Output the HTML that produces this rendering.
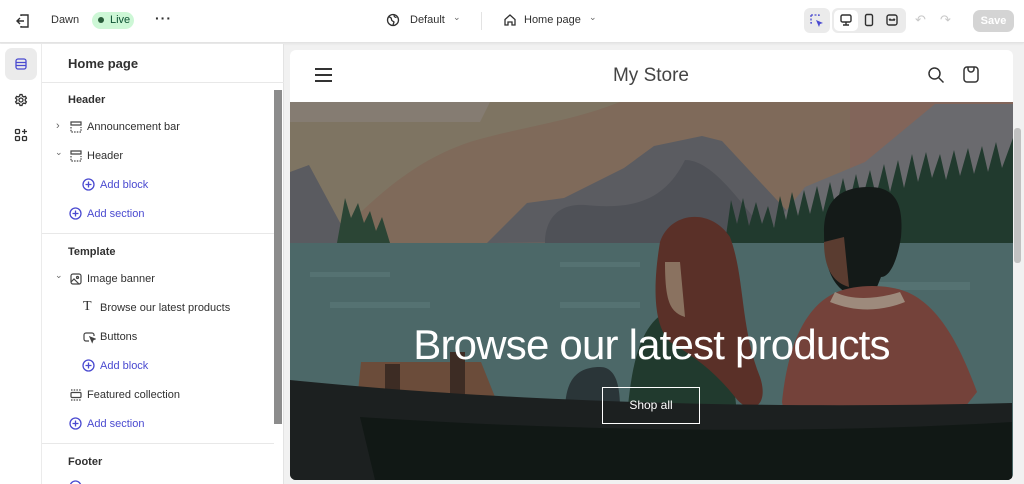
<!DOCTYPE html>
<html><head><meta charset="utf-8"><style>
*{box-sizing:border-box;margin:0;padding:0}
html,body{width:1024px;height:484px;overflow:hidden}
body{background:#f1f1f1;font-family:"Liberation Sans",sans-serif;color:#303030;position:relative;font-size:11px}
.top{position:absolute;left:0;top:0;width:1024px;height:43px;background:#fff;border-bottom:1px solid #e3e3e3;box-shadow:0 1px 2px rgba(0,0,0,.06)}
.abs{position:absolute}
.rail{position:absolute;left:0;top:44px;width:42px;height:440px;background:#fff;border-right:1px solid #ebebeb}
.panel{position:absolute;left:42px;top:44px;width:242px;height:440px;background:#fff;border-right:1px solid #e3e3e3}
.row{position:absolute;font-size:11px;color:#303030;white-space:nowrap}
.blue{color:#4a4ad0}
.h{font-weight:bold;font-size:11px}
.sep{position:absolute;left:0;width:232px;height:1px;background:#e8e8e8}
svg{display:block}
</style></head><body>
<div class="top">
  <svg class="abs" style="left:14px;top:12px" width="18" height="18" viewBox="0 0 18 18" fill="none" stroke="#303030" stroke-width="1.4"><path d="M7 4V3h7v12H7v-1"/><path d="M10 9H3M6 6L3 9l3 3"/></svg>
  <div class="abs" style="left:51px;top:14px;font-size:11px">Dawn</div>
  <div class="abs" style="left:92px;top:12px;width:42px;height:17px;border-radius:9px;background:#cdf7d6;font-size:11px;color:#0c5132;padding:2px 0 0 18px">Live</div>
  <div class="abs" style="left:98px;top:17px;width:6px;height:6px;border-radius:3px;background:#295c3a"></div>
  <div class="abs" style="left:155px;top:10px;font-size:14px;letter-spacing:1px;font-weight:bold">···</div>
  <svg class="abs" style="left:386px;top:13px" width="14" height="14" viewBox="0 0 14 14" fill="none" stroke="#303030" stroke-width="1.3"><circle cx="7" cy="7" r="5.5"/><path d="M2.5 4c2 0 3 1 3 2.5S7 8 8 9l-1 3M8 2c0 1.5 1 2.5 2.5 2.5"/></svg>
  <div class="abs" style="left:410px;top:14px;font-size:11px">Default</div>
  <div class="abs" style="left:453px;top:12px;font-size:9px;color:#666">⌄</div>
  <div class="abs" style="left:481px;top:12px;width:1px;height:18px;background:#e3e3e3"></div>
  <svg class="abs" style="left:503px;top:13px" width="14" height="14" viewBox="0 0 14 14" fill="none" stroke="#303030" stroke-width="1.3"><path d="M2 6.5L7 2l5 4.5V12H9V9H5v3H2z"/></svg>
  <div class="abs" style="left:524px;top:14px;font-size:11px">Home page</div>
  <div class="abs" style="left:589px;top:12px;font-size:9px;color:#666">⌄</div>
  <div class="abs" style="left:804px;top:8px;width:26px;height:25px;border-radius:6px;background:#ebebeb"></div>
  <svg class="abs" style="left:810px;top:14px" width="14" height="14" viewBox="0 0 14 14"><path d="M1 1h8v2M1 1v8h2" fill="none" stroke="#4a4ad0" stroke-width="1.3" stroke-dasharray="2 1.5"/><path d="M6 6l7 3-3 1-1 3z" fill="#4a4ad0"/></svg>
  <div class="abs" style="left:832px;top:8px;width:74px;height:25px;border-radius:6px;background:#ebebeb"></div>
  <div class="abs" style="left:834px;top:10px;width:24px;height:21px;border-radius:5px;background:#fff"></div>
  <svg class="abs" style="left:839px;top:13px" width="14" height="14" viewBox="0 0 14 14" fill="none" stroke="#303030" stroke-width="1.4"><rect x="2" y="2" width="10" height="7" rx="1.5"/><path d="M7 9v3M4 12h6"/></svg>
  <svg class="abs" style="left:862px;top:13px" width="14" height="14" viewBox="0 0 14 14" fill="none" stroke="#303030" stroke-width="1.4"><rect x="3.5" y="1.5" width="7" height="11" rx="1.5"/></svg>
  <svg class="abs" style="left:885px;top:13px" width="14" height="14" viewBox="0 0 14 14" fill="none" stroke="#303030" stroke-width="1.4"><rect x="2" y="2" width="10" height="10" rx="2"/><path d="M4 7h6M4 7l1.5-1.3M10 7l-1.5-1.3"/></svg>
  <div class="abs" style="left:915px;top:12px;color:#c8c8c8;font-size:13px">↶</div>
  <div class="abs" style="left:940px;top:12px;color:#c8c8c8;font-size:13px">↷</div>
  <div class="abs" style="left:973px;top:10px;width:41px;height:22px;border-radius:7px;background:#d4d4d4;color:#fff;font-size:11px;font-weight:bold;text-align:center;line-height:22px">Save</div>
</div>

<div class="rail">
  <div class="abs" style="left:5px;top:4px;width:32px;height:32px;border-radius:7px;background:#ebebeb"></div>
  <svg class="abs" style="left:14px;top:13px" width="14" height="14" viewBox="0 0 14 14" fill="none" stroke="#4a4ad0" stroke-width="1.3"><rect x="2" y="2" width="10" height="10" rx="2"/><path d="M2 5.5h10M2 8.5h10"/></svg>
  <svg class="abs" style="left:14px;top:49px" width="14" height="14" viewBox="0 0 14 14" fill="none" stroke="#303030" stroke-width="1.3"><circle cx="7" cy="7" r="2"/><path d="M6 1.5h2l.4 1.6 1.4.8 1.6-.5 1 1.7-1.2 1.2v1.4l1.2 1.2-1 1.7-1.6-.5-1.4.8L8 12.5H6l-.4-1.6-1.4-.8-1.6.5-1-1.7 1.2-1.2V6.3L1.6 5.1l1-1.7 1.6.5 1.4-.8z"/></svg>
  <svg class="abs" style="left:14px;top:84px" width="14" height="14" viewBox="0 0 14 14" fill="none" stroke="#303030" stroke-width="1.3"><rect x="1.5" y="1.5" width="4" height="4" rx="1"/><rect x="1.5" y="8.5" width="4" height="4" rx="1"/><rect x="8.5" y="8.5" width="4" height="4" rx="1"/><path d="M10.5 1v5M8 3.5h5"/></svg>
</div>

<div class="panel">
  <div class="row" style="left:26px;top:12px;font-size:13px;font-weight:bold">Home page</div>
  <div class="sep" style="top:38px;width:242px"></div>
  <div class="abs" style="left:232px;top:46px;width:8px;height:334px;background:#8c8c8c"></div>

  <div class="row h" style="left:26px;top:50px">Header</div>
  <div class="row" style="left:14px;top:76px;color:#666">›</div>
  <svg class="abs" style="left:28px;top:77px" width="12" height="12" viewBox="0 0 12 12" fill="none" stroke="#444" stroke-width="1.2"><path d="M1 1h10v3H1z"/><path d="M1 6v5h10V6" stroke-dasharray="1.5 1.2"/></svg>
  <div class="row" style="left:45px;top:77px">Announcement bar</div>
  <div class="row" style="left:13px;top:103px;color:#666;font-size:9px">⌄</div>
  <svg class="abs" style="left:28px;top:106px" width="12" height="12" viewBox="0 0 12 12" fill="none" stroke="#444" stroke-width="1.2"><path d="M1 1h10v3H1z"/><path d="M1 6v5h10V6" stroke-dasharray="1.5 1.2"/></svg>
  <div class="row" style="left:45px;top:106px">Header</div>
  <svg class="abs" style="left:40px;top:134px" width="13" height="13" viewBox="0 0 13 13" fill="none" stroke="#4a4ad0" stroke-width="1.3"><circle cx="6.5" cy="6.5" r="5.5"/><path d="M6.5 3.5v6M3.5 6.5h6"/></svg>
  <div class="row blue" style="left:58px;top:135px">Add block</div>
  <svg class="abs" style="left:27px;top:163px" width="13" height="13" viewBox="0 0 13 13" fill="none" stroke="#4a4ad0" stroke-width="1.3"><circle cx="6.5" cy="6.5" r="5.5"/><path d="M6.5 3.5v6M3.5 6.5h6"/></svg>
  <div class="row blue" style="left:45px;top:164px">Add section</div>
  <div class="sep" style="top:189px"></div>

  <div class="row h" style="left:26px;top:202px">Template</div>
  <div class="row" style="left:13px;top:226px;color:#666;font-size:9px">⌄</div>
  <svg class="abs" style="left:28px;top:229px" width="12" height="12" viewBox="0 0 12 12" fill="none" stroke="#444" stroke-width="1.2"><rect x="1" y="1" width="10" height="10" rx="2"/><circle cx="7.5" cy="4.5" r="1"/><path d="M1 9l3-3 5 5"/></svg>
  <div class="row" style="left:45px;top:229px">Image banner</div>
  <div class="row" style="left:41px;top:255px;font-family:'Liberation Serif',serif;font-size:14px">T</div>
  <div class="row" style="left:58px;top:258px">Browse our latest products</div>
  <svg class="abs" style="left:41px;top:287px" width="13" height="13" viewBox="0 0 13 13" fill="none" stroke="#444" stroke-width="1.2"><path d="M6 10H3a2 2 0 01-2-2V4a2 2 0 012-2h6a2 2 0 012 2v1"/><path d="M7 6l5 2-2 .8-.8 2.2z" fill="#444"/></svg>
  <div class="row" style="left:58px;top:287px">Buttons</div>
  <svg class="abs" style="left:40px;top:315px" width="13" height="13" viewBox="0 0 13 13" fill="none" stroke="#4a4ad0" stroke-width="1.3"><circle cx="6.5" cy="6.5" r="5.5"/><path d="M6.5 3.5v6M3.5 6.5h6"/></svg>
  <div class="row blue" style="left:58px;top:316px">Add block</div>
  <svg class="abs" style="left:28px;top:345px" width="12" height="12" viewBox="0 0 12 12" fill="none" stroke="#444" stroke-width="1.2"><path d="M1 1h10M1 11h10" stroke-dasharray="1.5 1.2"/><rect x="1" y="3.5" width="10" height="5" rx="1"/></svg>
  <div class="row" style="left:45px;top:345px">Featured collection</div>
  <svg class="abs" style="left:27px;top:373px" width="13" height="13" viewBox="0 0 13 13" fill="none" stroke="#4a4ad0" stroke-width="1.3"><circle cx="6.5" cy="6.5" r="5.5"/><path d="M6.5 3.5v6M3.5 6.5h6"/></svg>
  <div class="row blue" style="left:45px;top:374px">Add section</div>
  <div class="sep" style="top:399px"></div>
  <div class="row h" style="left:26px;top:412px">Footer</div>
  <svg class="abs" style="left:27px;top:436px" width="13" height="13" viewBox="0 0 13 13" fill="none" stroke="#4a4ad0" stroke-width="1.3"><circle cx="6.5" cy="6.5" r="5.5"/></svg>
</div>

<!-- preview -->
<div class="abs" style="left:290px;top:50px;width:723px;height:430px;background:#fff;border-radius:6px;overflow:hidden">
  <div class="abs" style="left:25px;top:18px;width:17px;height:1.5px;background:#333;box-shadow:0 6px 0 #333,0 12px 0 #333"></div>
  <div class="abs" style="left:0;top:15px;width:722px;text-align:center;font-size:19px;color:#444">My Store</div>
  <svg class="abs" style="left:637px;top:16px" width="18" height="18" viewBox="0 0 18 18" fill="none" stroke="#333" stroke-width="1.5"><circle cx="7.5" cy="7.5" r="5.5"/><path d="M11.5 11.5l5 5"/></svg>
  <svg class="abs" style="left:672px;top:15px" width="18" height="19" viewBox="0 0 18 19" fill="none" stroke="#333" stroke-width="1.5"><rect x="2" y="2" width="14" height="15" rx="3"/><path d="M6 2v2a3 3 0 006 0V2"/></svg>
  <svg class="abs" style="left:0;top:52px" width="723" height="378" viewBox="0 0 723 378">
    <rect width="723" height="378" fill="#7f6a5a"/>
    <path d="M0 0h330C280 20 230 25 180 40 120 60 80 100 40 141H0z" fill="#7e7462"/>
    <path d="M0 0h200l-10 20H0z" fill="#857c72"/>
    <path d="M560 0h163v141H560z" fill="#82655a"/>
    <path d="M0 70l19-7 42 78H0z" fill="#5a5b60"/>
    <path d="M47 141l8-45 6 20 7-15 6 20 6-12 6 20 6-14 8 26z" fill="#2b4535"/>
    <path d="M197 141l40-40 37-5 60-30 30-22 48-10 20 5 93 100z" fill="#5b5c61"/>
    <path d="M255 141c0-20 10-40 40-38 50 5 80-5 100-45 30 0 60 50 90 83z" fill="#4f5157"/>
    <path d="M470 141l45-56 60-25 70-58h78v139z" fill="#6a6a6e"/>
    <path d="M435 141L441 98 447 122 453 96 459 124 466 100 472 122 478 104 484 126 490 94 496 118 502 90 508 114 514 88 520 112 527 84 533 110 540 80 546 106 553 76 559 102 566 72 572 98 580 68 586 94 594 62 600 90 608 58 614 86 622 52 628 80 636 50 642 76 650 52 656 78 664 48 670 74 678 46 684 72 692 44 698 70 706 40 712 66 723 36V141z" fill="#213a2e"/>
    <rect y="141" width="723" height="237" fill="#4c6868"/>
    <path d="M20 170h80v5H20zM270 160h80v5h-80zM40 200h100v6H40zM270 200h80v6h-80zM560 180h120v8H560z" fill="#557272"/>
    <path d="M66 310l5-50h120l20 50z" fill="#6b4c3a"/>
    <path d="M95 262h15v48H95zM160 250h15v60h-15z" fill="#3d2c24"/>
    <path d="M275 310c0-30 10-45 35-45 20 0 20 30 20 45z" fill="#2a3538"/>
    <path d="M337 315c5-60 15-100 50-110 30 0 55 30 60 110z" fill="#213a2e"/>
    <path d="M380 240c-20-20-15-70-10-100 10-30 50-35 70-5 15 40 10 90 30 140 10 30-10 40-25 20-20-25-40-40-65-55z" fill="#5a3028"/>
    <path d="M375 160c0 40 5 50 20 55l-5-55z" fill="#8a7260"/>
    <path d="M534 130c0-35 20-45 45-45s35 15 32 50c-3 20-10 40-20 40l-6 15h-30c-15-10-21-30-21-60z" fill="#141a18"/>
    <path d="M534 140c0 25 8 40 25 45l-5-50z" fill="#5a3c30"/>
    <path d="M492 300c5-50 20-95 55-110 20-8 50-8 70 0 35 15 55 60 70 100l-20 25H495z" fill="#74423a"/>
    <path d="M545 190c15 8 40 8 65 0l5 10c-25 10-50 10-75 0z" fill="#9d8a7c"/>
    <path d="M0 278c200 20 450 30 722 23v77H0z" fill="#1c2020"/>
    <path d="M70 315c230 15 450 17 652 5v58H85z" fill="#111815"/>
  </svg>
  <div class="abs" style="left:0;top:270px;width:723px;text-align:center;color:#fff;font-size:42px;letter-spacing:-0.8px;line-height:50px">Browse our latest products</div>
  <div class="abs" style="left:312px;top:337px;width:98px;height:37px;border:1px solid #fff;color:#fff;font-size:12px;text-align:center;line-height:35px">Shop all</div>
</div>
<div class="abs" style="left:1013px;top:50px;width:9px;height:430px;background:#f1f1f1"></div>
<div class="abs" style="left:1014px;top:128px;width:7px;height:135px;background:#c1c1c1;border-radius:3px"></div>
</body></html>
